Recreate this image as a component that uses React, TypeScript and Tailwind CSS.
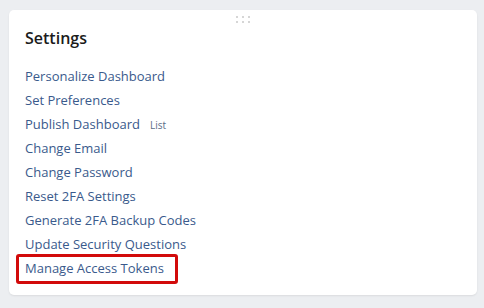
const links = [
  "Personalize Dashboard",
  "Set Preferences",
  "Publish Dashboard",
  "Change Email",
  "Change Password",
  "Reset 2FA Settings",
  "Generate 2FA Backup Codes",
  "Update Security Questions",
  "Manage Access Tokens",
]

export default function App() {
  return (
    <div
      className="w-[484px] h-[308px] bg-[#eceef1] pt-[10px] pl-[9px]"
      style={{ fontFamily: "'Open Sans', sans-serif" }}
    >
      <div className="relative w-[468px] h-[285px] bg-white rounded-[5px] shadow-[0_1px_2px_rgba(0,0,0,0.08)] px-4 pt-[17px]">
        {/* drag handle */}
        <div className="absolute left-[227px] top-[6px] grid grid-cols-3 gap-x-[4px] gap-y-[3px]">
          {Array.from({ length: 6 }).map((_, i) => (
            <span key={i} className="w-[2px] h-[2px] bg-[#d6d6d6]" />
          ))}
        </div>

        <h2 className="text-[16px] font-semibold text-[#1b1b1b] leading-[22px]">Settings</h2>

        <ul className="mt-[16px] flex flex-col">
          {links.map((l) => (
            <li key={l} className="h-[24px] flex items-center">
              {l === "Manage Access Tokens" ? (
                <span className="-ml-[9px] pl-[6px] pr-[11px] h-[30px] flex items-center border-[3px] border-[#d20a0a] rounded-[3px] text-[13px] text-[#3a5a8c]">
                  {l}
                </span>
              ) : (
                <a className="text-[13px] text-[#3a5a8c] cursor-pointer">{l}</a>
              )}
              {l === "Publish Dashboard" && (
                <span className="ml-[10px] text-[10px] text-[#5b6c86]">List</span>
              )}
            </li>
          ))}
        </ul>
      </div>
    </div>
  )
}
